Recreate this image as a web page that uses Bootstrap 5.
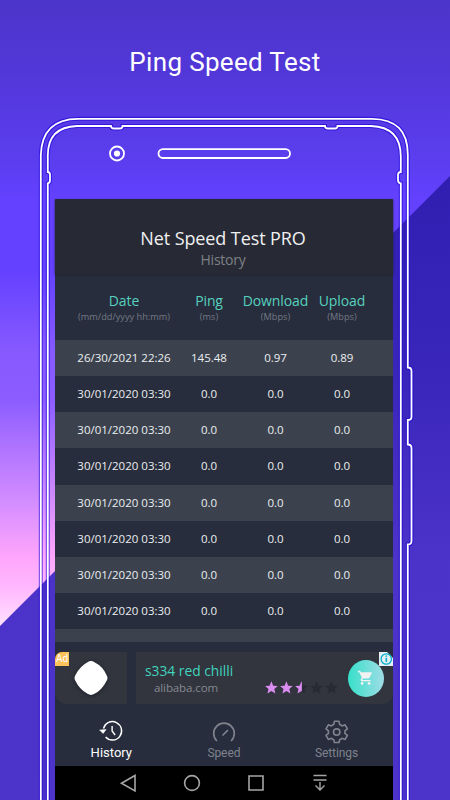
<!DOCTYPE html>
<html lang="en">
<head>
<meta charset="utf-8">
<meta name="viewport" content="width=device-width, initial-scale=1">
<title>Ping Speed Test</title>
<link href="https://cdn.jsdelivr.net/npm/bootstrap@5.3.0/dist/css/bootstrap.min.css" rel="stylesheet">
<style>
body{width:450px;height:800px;overflow:hidden;font-family:"Open Sans","Noto Sans",sans-serif;background:#4c34cb}
.promo{width:450px;height:800px;padding-top:44px;background:linear-gradient(180deg,#4c35c9 0,#5237d8 70px,#5c3ef0 165px,#6341ff 200px,#6441ff 270px,#8659ff 350px,#8c5cff 400px,#aa70ff 440px,#d28cff 500px,#ffa6fc 558px,#ffb5fd 585px,#ffe0ff 626px)}
.frame-art{left:0;top:0;z-index:0}
.headline{font-family:Roboto,sans-serif;font-size:26px;line-height:37px;letter-spacing:.33px;height:155px;color:#fff}
.screen{width:338px;height:601px;margin-left:55px;background:#272d3c;z-index:1}
.app-head{height:75px;padding:27px 2px 0 0;background:#272a34;box-shadow:0 1px 2px #20232d}
.app-name{font-size:18px;line-height:24px;letter-spacing:-.1px;color:#f0f0f2}
.app-sub{font-size:14px;line-height:19px;letter-spacing:-.25px;color:#7e8088}
.cols{display:grid;grid-template-columns:106px 64px 69px 64px;padding-left:16px;text-align:center;white-space:nowrap}
.cols>*{display:flex;flex-direction:column;align-items:center}
.col-heads{height:66px;padding-top:17px;color:#56d1bf;font-size:14px;line-height:20px;letter-spacing:-.1px}
.col-heads small{font-size:9.2px;line-height:11px;letter-spacing:0;color:#747985}
.entry{height:36.2px;line-height:36.9px;font-size:11.5px;color:#eceef0}
.entry:nth-child(odd){background:#3b424e}
.entries{height:303px;overflow:hidden}
.ad{height:52px;margin-top:10px}
.ad-logo{width:72px;background:#32353e;border-radius:8px 0 0 12px}
.ad-body{width:257px;background:#32353e;border-radius:0 6px 10px 0;padding:9px 0 0 9px}
.ad-title{font-size:13.8px;line-height:20px;color:#40d3bd}
.ad-site{font-size:11.5px;line-height:14px;letter-spacing:-.1px;padding-left:9px;color:#858891}
.ad-tag{left:0;top:0;width:14px;height:14px;border-radius:7px 0 0 0;background:#ffc35c;color:#fff;font:10px/14px Roboto,sans-serif;text-align:center}
.stars{left:209px;top:28px}
.cart{left:293px;top:8px}
.info{right:0;top:0}
.tabs{height:62px;font-family:Roboto,sans-serif;font-size:12px;color:#7f838e}
.tab-item{width:112.6px;padding-top:12px}
.tab-item svg{height:28px;flex-shrink:0}
.tab-item span{line-height:18px;letter-spacing:-.1px}
.tab-item.current{color:#fff}
.tab-item.current span{font-size:13px;letter-spacing:0}
.sysbar{height:34px;background:#000}
</style>
<script src="https://cdn.jsdelivr.net/npm/bootstrap@5.3.0/dist/js/bootstrap.bundle.min.js"></script>
</head>
<body>
<main class="promo position-relative">
<svg class="frame-art position-absolute" width="450" height="800" fill="none" aria-hidden="true">
<defs><linearGradient id="shade" gradientUnits="userSpaceOnUse" x1="0" y1="176" x2="0" y2="800"><stop offset="0" stop-color="#301eb1"/><stop offset=".3" stop-color="#3925ba"/><stop offset=".6" stop-color="#4b32c8"/><stop offset="1" stop-color="#4c34ca"/></linearGradient></defs>
<path d="M450 176V800H0V626Z" fill="url(#shade)"/>
<g stroke="#1c00d9" stroke-width="4" opacity=".6">
<path d="M40.800 800V155Q42 119 78 118.800H372Q408 119 407.800 155V367.500Q411.500 367.500 411.500 371V417Q411.500 420 407.800 420V444.500Q411.500 444.500 411.500 448V541Q411.500 544.500 407.800 544.500V800"/>
<path d="M47.800 800V183.500Q50 183 50 180V175Q50 172 47.800 172V157Q47 127 77 126H111Q111 128.500 114 128.500H120Q122.500 128.500 122.500 126H325Q325 128.500 328 128.500H335Q337.500 128.500 337.500 126H371Q401 127 400.800 157V172Q398 172 398 175V180Q398 183 400.800 183.500V800"/>
</g>
<g stroke="#fff" stroke-width="1.800">
<path d="M40.800 800V155Q42 119 78 118.800H372Q408 119 407.800 155V367.500Q411.500 367.500 411.500 371V417Q411.500 420 407.800 420V444.500Q411.500 444.500 411.500 448V541Q411.500 544.500 407.800 544.500V800"/>
<path d="M47.800 800V183.500Q50 183 50 180V175Q50 172 47.800 172V157Q47 127 77 126H111Q111 128.500 114 128.500H120Q122.500 128.500 122.500 126H325Q325 128.500 328 128.500H335Q337.500 128.500 337.500 126H371Q401 127 400.800 157V172Q398 172 398 175V180Q398 183 400.800 183.500V800"/>
<rect x="158.500" y="149.200" width="131.500" height="8.800" rx="4.400"/>
<circle cx="117" cy="153.500" r="7"/>
</g>
<circle cx="117" cy="153.500" r="3.100" fill="#fff"/>
</svg>
<h1 class="headline position-relative text-center fw-normal m-0">Ping Speed Test</h1>
<section class="screen position-relative d-flex flex-column">
<header class="app-head text-center">
<div class="app-name">Net Speed Test PRO</div>
<div class="app-sub">History</div>
</header>
<div class="cols col-heads">
<div>Date<small>(mm/dd/yyyy hh:mm)</small></div><div>Ping<small>(ms)</small></div><div>Download<small>(Mbps)</small></div><div>Upload<small>(Mbps)</small></div>
</div>
<div class="entries">
<div class="cols entry"><span>26/30/2021 22:26</span><span>145.48</span><span>0.97</span><span>0.89</span></div>
<div class="cols entry"><span>30/01/2020 03:30</span><span>0.0</span><span>0.0</span><span>0.0</span></div>
<div class="cols entry"><span>30/01/2020 03:30</span><span>0.0</span><span>0.0</span><span>0.0</span></div>
<div class="cols entry"><span>30/01/2020 03:30</span><span>0.0</span><span>0.0</span><span>0.0</span></div>
<div class="cols entry"><span>30/01/2020 03:30</span><span>0.0</span><span>0.0</span><span>0.0</span></div>
<div class="cols entry"><span>30/01/2020 03:30</span><span>0.0</span><span>0.0</span><span>0.0</span></div>
<div class="cols entry"><span>30/01/2020 03:30</span><span>0.0</span><span>0.0</span><span>0.0</span></div>
<div class="cols entry"><span>30/01/2020 03:30</span><span>0.0</span><span>0.0</span><span>0.0</span></div>
<div class="entry"></div>
</div>
<aside class="ad position-relative d-flex justify-content-between">
<div class="ad-logo d-flex justify-content-center align-items-center">
<svg width="40" height="40"><path d="M16.500 4.200Q20 2 23.500 4.200Q32 8.500 35.500 17Q37.500 20 35.500 23Q31 32 23.500 35.800Q20 38 16.500 35.800Q8.500 31.500 4.500 23Q2.500 20 4.500 17Q9 8 16.500 4.200Z" fill="#fff" style="filter:drop-shadow(0 1px 2px #1d202a)"/></svg>
</div>
<div class="ad-body"><div class="ad-title">s334 red chilli</div><div class="ad-site">alibaba.com</div></div>
<span class="ad-tag position-absolute">Ad</span>
<svg class="stars position-absolute" width="76" height="16">
<defs><path id="star" d="M7 1.300L8.800 5.700L13.300 6L9.900 9L11 13.500L7 11.100L3 13.500L4.100 9L.7 6L5.200 5.700Z"/><clipPath id="half"><path d="M0 0H7.500V16H0Z"/></clipPath></defs>
<g fill="#db8cf0"><use href="#star" x=".4"/><use href="#star" x="15.400"/></g>
<g fill="#272a34"><use href="#star" x="30.400"/><use href="#star" x="45.500"/><use href="#star" x="60.500"/></g>
<g transform="translate(30.400 0)" fill="#db8cf0"><use href="#star" clip-path="url(#half)"/></g>
</svg>
<svg class="cart position-absolute" width="36" height="37">
<defs><linearGradient id="mint"><stop stop-color="#37e0c9"/><stop offset="1" stop-color="#9fdce6"/></linearGradient></defs>
<ellipse cx="18" cy="18.500" rx="18" ry="18.400" fill="url(#mint)"/>
<path transform="translate(9.200 9.400) scale(.7)" fill="#f2f2f2" d="M7 18c-1.100 0-1.990.9-1.990 2S5.900 22 7 22s2-.9 2-2-.9-2-2-2zM1 2v2h2l3.600 7.590-1.350 2.450c-.16.280-.25.610-.25.960 0 1.100.9 2 2 2h12v-2H7.420c-.14 0-.25-.11-.25-.25l.03-.12.900-1.630h7.450c.75 0 1.410-.41 1.750-1.030l3.580-6.490A1 1 0 0 0 20 4H5.210l-.94-2zm16 16c-1.100 0-1.990.9-1.990 2s.89 2 1.990 2 2-.9 2-2-.9-2-2-2z"/>
</svg>
<svg class="info position-absolute" width="14" height="14"><path d="M0 0H8L14 6V14H0Z" fill="#e5eff4"/><circle cx="7.300" cy="7" r="5.200" fill="none" stroke="#00aecb" stroke-width="1.300"/><path d="M7.300 5.800V10M7.300 3.500V4.800" stroke="#00aecb" stroke-width="1.600"/></svg>
</aside>
<nav class="tabs d-flex">
<div class="tab-item current d-flex flex-column align-items-center">
<svg width="28" viewBox="0 0 28 28" fill="none" stroke="currentColor" stroke-width="1.400"><path d="M6.500 12.500A9.200 9.200 0 1 1 8.600 21"/><path d="M2.600 14L6.100 17.500L9.100 13.500Z" fill="currentColor" stroke-width=".5"/><path d="M15.100 10V15L18.100 19"/></svg><span>History</span>
</div>
<div class="tab-item d-flex flex-column align-items-center">
<svg width="28" viewBox="0 0 28 28" fill="none" stroke="currentColor" stroke-width="1.700" stroke-linecap="round"><path d="M6.500 24.500A10.300 10.300 0 1 1 21.500 24.500M13 19L17.500 14.500"/></svg><span>Speed</span>
</div>
<div class="tab-item d-flex flex-column align-items-center">
<svg width="28" viewBox="0 0 28 28" fill="none" stroke="currentColor" stroke-width="1.600" stroke-linejoin="round"><path transform="translate(.7 0)" d="M11.700 5.300H16.300L17 8.600Q18.300 9 19.300 9.900L22.400 8.800L24.700 12.800L22.200 14.900Q22.500 16.100 22.200 17.300L24.700 19.400L22.400 23.400L19.300 22.300Q18.300 23.200 17 23.600L16.300 26.500H11.700L11 23.600Q9.700 23.200 8.700 22.300L5.600 23.400L3.300 19.400L5.800 17.300Q5.500 16.100 5.800 14.900L3.300 12.800L5.600 8.800L8.700 9.900Q9.700 9 11 8.600Z"/><circle cx="14.700" cy="16.100" r="3.200"/></svg><span>Settings</span>
</div>
</nav>
<footer class="sysbar">
<svg width="338" height="34" fill="none" stroke="#a5a5a5" stroke-width="1.600"><path d="M66.500 17.200L80 9.500V24.900Z"/><circle cx="137" cy="17" r="7.400"/><path d="M194 10H208V24H194Z"/><path d="M258.500 9.500H271.500M258.500 14H271.500M265 16V23.500M260.500 19.500L265 24L269.500 19.500" stroke-width="1.400"/></svg>
</footer>
</section>
</main>
</body>
</html>
